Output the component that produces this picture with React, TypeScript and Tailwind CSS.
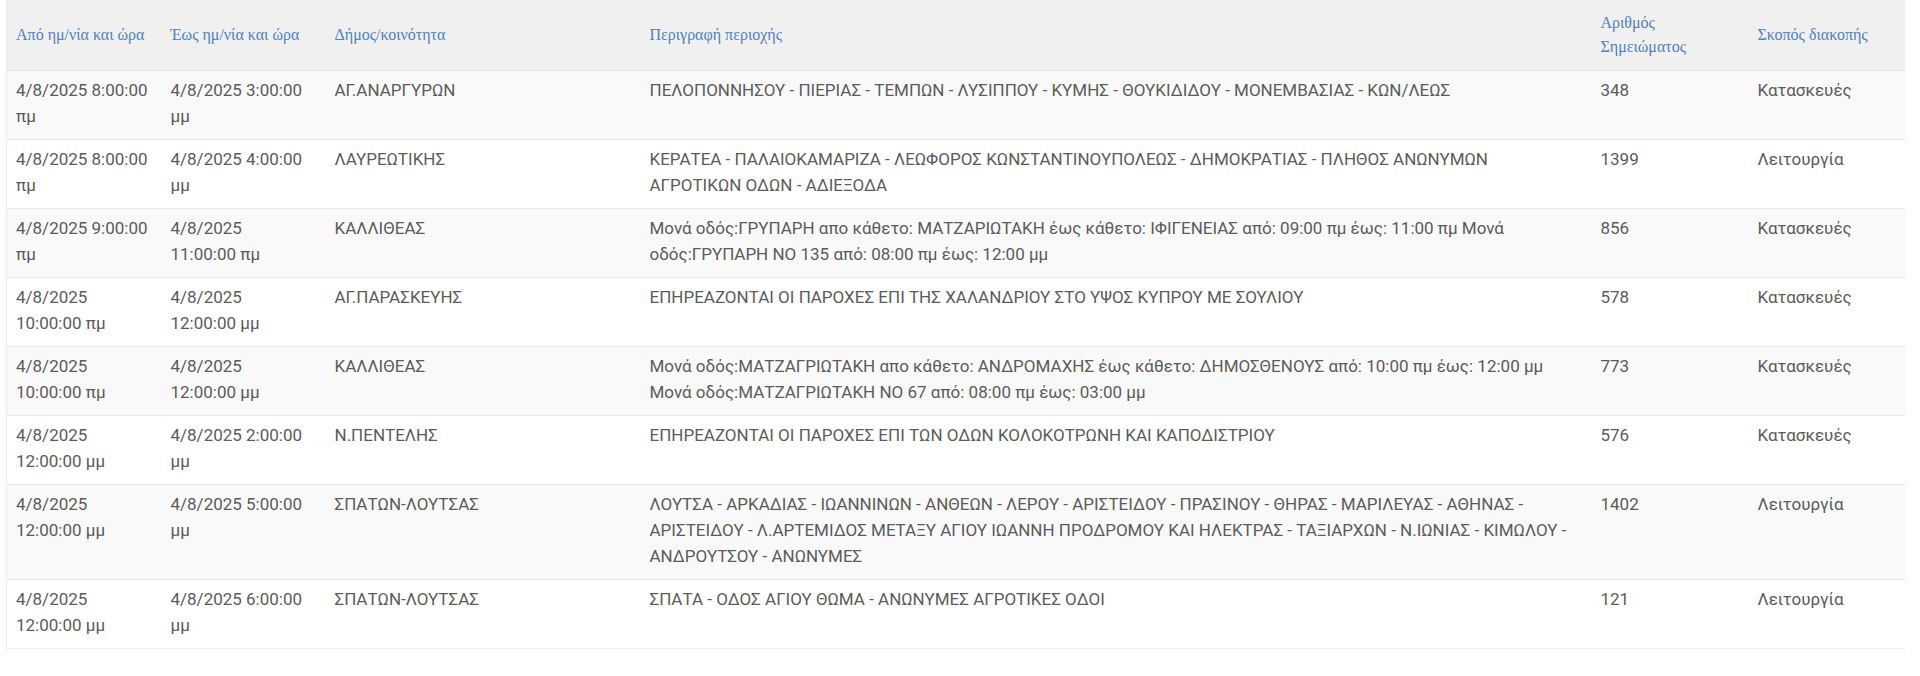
const columns = [
  { label: "Από ημ/νία και ώρα", width: "w-[155px] pr-[4px]" },
  { label: "Έως ημ/νία και ώρα", width: "w-[164px] pr-[4px]" },
  { label: "Δήμος/κοινότητα", width: "w-[315px] pr-[4px]" },
  { label: "Περιγραφή περιοχής", width: "w-[951px] pr-[4px]" },
  { label: "Αριθμός Σημειώματος", width: "w-[157px] pr-[20px]" },
  { label: "Σκοπός διακοπής", width: "w-[156px] pr-[4px]" },
];

// description lines are kept as they wrap on the original page
const rows = [
  {
    from: "4/8/2025 8:00:00 πμ",
    to: "4/8/2025 3:00:00 μμ",
    area: "ΑΓ.ΑΝΑΡΓΥΡΩΝ",
    desc: ["ΠΕΛΟΠΟΝΝΗΣΟΥ - ΠΙΕΡΙΑΣ - ΤΕΜΠΩΝ - ΛΥΣΙΠΠΟΥ - ΚΥΜΗΣ - ΘΟΥΚΙΔΙΔΟΥ - ΜΟΝΕΜΒΑΣΙΑΣ - ΚΩΝ/ΛΕΩΣ"],
    note: "348",
    reason: "Κατασκευές",
  },
  {
    from: "4/8/2025 8:00:00 πμ",
    to: "4/8/2025 4:00:00 μμ",
    area: "ΛΑΥΡΕΩΤΙΚΗΣ",
    desc: [
      "ΚΕΡΑΤΕΑ - ΠΑΛΑΙΟΚΑΜΑΡΙΖΑ - ΛΕΩΦΟΡΟΣ ΚΩΝΣΤΑΝΤΙΝΟΥΠΟΛΕΩΣ - ΔΗΜΟΚΡΑΤΙΑΣ - ΠΛΗΘΟΣ ΑΝΩΝΥΜΩΝ",
      "ΑΓΡΟΤΙΚΩΝ ΟΔΩΝ - ΑΔΙΕΞΟΔΑ",
    ],
    note: "1399",
    reason: "Λειτουργία",
  },
  {
    from: "4/8/2025 9:00:00 πμ",
    to: "4/8/2025 11:00:00 πμ",
    area: "ΚΑΛΛΙΘΕΑΣ",
    desc: [
      "Μονά οδός:ΓΡΥΠΑΡΗ απο κάθετο: ΜΑΤΖΑΡΙΩΤΑΚΗ έως κάθετο: ΙΦΙΓΕΝΕΙΑΣ από: 09:00 πμ έως: 11:00 πμ Μονά",
      "οδός:ΓΡΥΠΑΡΗ ΝΟ 135 από: 08:00 πμ έως: 12:00 μμ",
    ],
    note: "856",
    reason: "Κατασκευές",
  },
  {
    from: "4/8/2025 10:00:00 πμ",
    to: "4/8/2025 12:00:00 μμ",
    area: "ΑΓ.ΠΑΡΑΣΚΕΥΗΣ",
    desc: ["ΕΠΗΡΕΑΖΟΝΤΑΙ ΟΙ ΠΑΡΟΧΕΣ ΕΠΙ ΤΗΣ ΧΑΛΑΝΔΡΙΟΥ ΣΤΟ ΥΨΟΣ ΚΥΠΡΟΥ ΜΕ ΣΟΥΛΙΟΥ"],
    note: "578",
    reason: "Κατασκευές",
  },
  {
    from: "4/8/2025 10:00:00 πμ",
    to: "4/8/2025 12:00:00 μμ",
    area: "ΚΑΛΛΙΘΕΑΣ",
    desc: [
      "Μονά οδός:ΜΑΤΖΑΓΡΙΩΤΑΚΗ απο κάθετο: ΑΝΔΡΟΜΑΧΗΣ έως κάθετο: ΔΗΜΟΣΘΕΝΟΥΣ από: 10:00 πμ έως: 12:00 μμ",
      "Μονά οδός:ΜΑΤΖΑΓΡΙΩΤΑΚΗ ΝΟ 67 από: 08:00 πμ έως: 03:00 μμ",
    ],
    note: "773",
    reason: "Κατασκευές",
  },
  {
    from: "4/8/2025 12:00:00 μμ",
    to: "4/8/2025 2:00:00 μμ",
    area: "Ν.ΠΕΝΤΕΛΗΣ",
    desc: ["ΕΠΗΡΕΑΖΟΝΤΑΙ ΟΙ ΠΑΡΟΧΕΣ ΕΠΙ ΤΩΝ ΟΔΩΝ ΚΟΛΟΚΟΤΡΩΝΗ ΚΑΙ ΚΑΠΟΔΙΣΤΡΙΟΥ"],
    note: "576",
    reason: "Κατασκευές",
  },
  {
    from: "4/8/2025 12:00:00 μμ",
    to: "4/8/2025 5:00:00 μμ",
    area: "ΣΠΑΤΩΝ-ΛΟΥΤΣΑΣ",
    desc: [
      "ΛΟΥΤΣΑ - ΑΡΚΑΔΙΑΣ - ΙΩΑΝΝΙΝΩΝ - ΑΝΘΕΩΝ - ΛΕΡΟΥ - ΑΡΙΣΤΕΙΔΟΥ - ΠΡΑΣΙΝΟΥ - ΘΗΡΑΣ - ΜΑΡΙΛΕΥΑΣ - ΑΘΗΝΑΣ -",
      "ΑΡΙΣΤΕΙΔΟΥ - Λ.ΑΡΤΕΜΙΔΟΣ ΜΕΤΑΞΥ ΑΓΙΟΥ ΙΩΑΝΝΗ ΠΡΟΔΡΟΜΟΥ ΚΑΙ ΗΛΕΚΤΡΑΣ - ΤΑΞΙΑΡΧΩΝ - Ν.ΙΩΝΙΑΣ - ΚΙΜΩΛΟΥ -",
      "ΑΝΔΡΟΥΤΣΟΥ - ΑΝΩΝΥΜΕΣ",
    ],
    note: "1402",
    reason: "Λειτουργία",
  },
  {
    from: "4/8/2025 12:00:00 μμ",
    to: "4/8/2025 6:00:00 μμ",
    area: "ΣΠΑΤΩΝ-ΛΟΥΤΣΑΣ",
    desc: ["ΣΠΑΤΑ - ΟΔΟΣ ΑΓΙΟΥ ΘΩΜΑ - ΑΝΩΝΥΜΕΣ ΑΓΡΟΤΙΚΕΣ ΟΔΟΙ"],
    note: "121",
    reason: "Λειτουργία",
  },
];

export default function App() {
  return (
    <div className="min-h-[676px] w-[1920px] bg-white pl-[6px] pr-[16px]">
      <table className="w-[1898px] table-fixed border-collapse border-b border-l border-[#ececec]">
        <thead>
          <tr className="h-[70px] bg-[#f0f0f0]">
            {columns.map((c) => (
              <th
                key={c.label}
                className={`${c.width} pl-[9px] text-left align-middle font-normal text-[16px] leading-[24px] text-[#4f81bd] [font-family:'Liberation_Serif',serif]`}
              >
                {c.label}
              </th>
            ))}
          </tr>
        </thead>
        <tbody className="text-[17px] leading-[26px] text-[#5b5b5b] [font-family:Roboto,'Noto_Sans',sans-serif]">
          {rows.map((r, i) => (
            <tr key={i} className={`border-t border-[#e8e8e8] ${i % 2 === 0 ? "bg-[#f9f9f9]" : "bg-white"}`}>
              <td className="pl-[9px] pr-[8px] pt-[6px] pb-[10px] align-top">{r.from}</td>
              <td className="pl-[9px] pr-[17px] pt-[6px] pb-[10px] align-top">{r.to}</td>
              <td className="pl-[9px] pr-[20px] pt-[6px] pb-[10px] align-top">{r.area}</td>
              <td className="pl-[9px] pr-[4px] pt-[6px] pb-[10px] align-top">
                {r.desc.map((line) => (
                  <div key={line} className="whitespace-nowrap">
                    {line}
                  </div>
                ))}
              </td>
              <td className="pl-[9px] pr-[20px] pt-[6px] pb-[10px] align-top">{r.note}</td>
              <td className="pl-[9px] pr-[20px] pt-[6px] pb-[10px] align-top">{r.reason}</td>
            </tr>
          ))}
        </tbody>
      </table>
    </div>
  );
}
